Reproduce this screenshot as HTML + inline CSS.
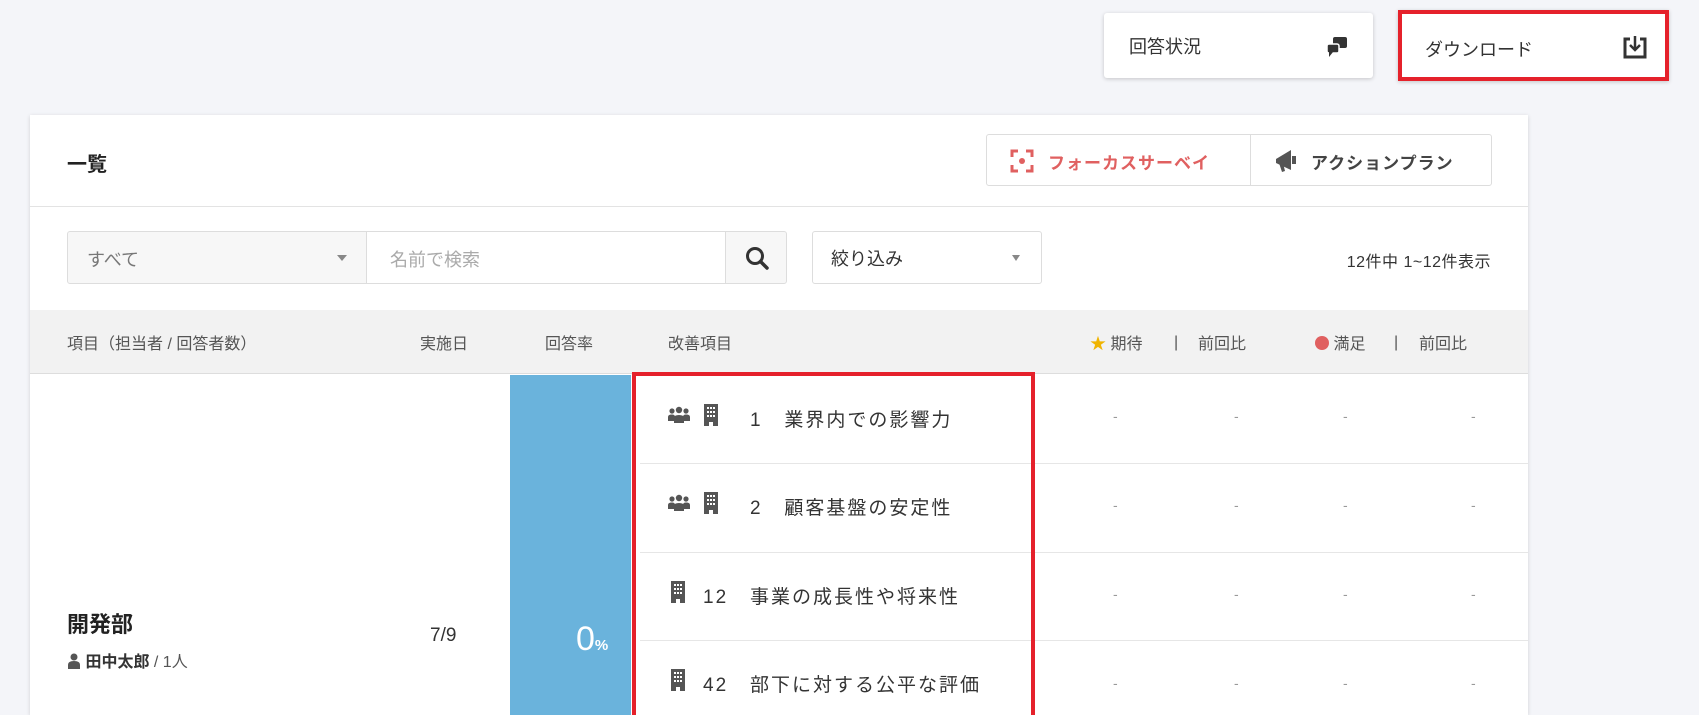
<!DOCTYPE html><html style="width:1699px;height:715px;overflow:hidden"><head><meta charset="utf-8"><style>
*{box-sizing:border-box;margin:0;padding:0}
body{width:1699px;height:715px;overflow:hidden;background:#f4f5f9;font-family:"Liberation Sans","Noto Sans CJK JP",sans-serif;color:#333;position:relative}
.a{position:absolute}
.btn{background:#fff;border-radius:3px;box-shadow:0 1px 4px rgba(0,0,0,.2);font-size:18px;color:#333}
.card{left:30px;top:115px;width:1498px;height:600px;background:#fff;box-shadow:0 1px 4px rgba(0,0,0,.15)}
.t{white-space:nowrap}
.hd{font-size:16px;color:#555;top:330px}
.dash{color:#999;font-size:14px}
.rowline{left:640px;width:888px;height:1px;background:#e6e6e6}
.it{font-size:19px;color:#333;letter-spacing:2px}
</style></head><body>
<div class="a btn" style="left:1104px;top:13px;width:269px;height:65px"><span class="a t" style="left:25px;top:20px">回答状況</span>
<svg class="a" style="left:220px;top:22px" width="28" height="24" viewBox="0 0 28 24"><rect x="9" y="2" width="14" height="11" rx="2" fill="#333"/><rect x="3" y="9" width="12" height="9" rx="2" fill="#333" stroke="#fff" stroke-width="1.5"/><path d="M5 17 L5 22 L9 17Z" fill="#333"/></svg></div>
<div class="a btn" style="left:1398px;top:10px;width:271px;height:71px;border:4px solid #e5212b;border-radius:0"><span class="a t" style="left:23px;top:22px">ダウンロード</span>
<svg class="a" style="left:220px;top:20px" width="26" height="26" viewBox="0 0 26 26"><path d="M8 5H3V23H23V5H18" fill="none" stroke="#333" stroke-width="3"/><path d="M13 2V15M8 11L13 16L18 11" fill="none" stroke="#333" stroke-width="2.5"/></svg></div>
<div class="a card"></div>
<div class="a t" style="left:67px;top:148px;font-size:20px;font-weight:bold;color:#222">一覧</div>
<div class="a" style="left:30px;top:206px;width:1498px;height:1px;background:#e3e3e3"></div>
<div class="a" style="left:986px;top:134px;width:506px;height:52px;border:1px solid #ddd;border-radius:3px"></div>
<div class="a" style="left:1250px;top:134px;width:1px;height:52px;background:#ddd"></div>
<svg class="a" style="left:1010px;top:149px" width="24" height="24" viewBox="0 0 24 24"><path d="M2 8V2H8M16 2H22V8M22 16V22H16M8 22H2V16" fill="none" stroke="#e06060" stroke-width="3"/><circle cx="12" cy="12" r="3" fill="#e06060"/></svg>
<span class="a t" style="left:1048px;top:149px;font-size:17px;font-weight:bold;color:#e06060;letter-spacing:1px">フォーカスサーベイ</span>
<svg class="a" style="left:1273px;top:147px" width="26" height="28" viewBox="0 0 26 28"><path d="M3 12L18 3V23L3 16Z" fill="#555"/><rect x="19" y="9" width="4" height="8" fill="#555"/><path d="M6 16L9 25L12 24L10 16Z" fill="#555"/></svg>
<span class="a t" style="left:1311px;top:149px;font-size:17px;font-weight:bold;color:#444;letter-spacing:1px">アクションプラン</span>
<div class="a" style="left:67px;top:231px;width:720px;height:53px;border:1px solid #ddd;border-radius:3px;background:#f7f7f7"></div>
<div class="a" style="left:366px;top:232px;width:360px;height:51px;background:#fff;border-left:1px solid #ddd;border-right:1px solid #ddd"></div>
<span class="a t" style="left:87px;top:246px;font-size:18px;color:#777">すべて</span>
<span class="a" style="left:337px;top:255px;border:5px solid transparent;border-top:6px solid #888"></span>
<span class="a t" style="left:390px;top:246px;font-size:18px;color:#aaa">名前で検索</span>
<svg class="a" style="left:744px;top:245px" width="26" height="26" viewBox="0 0 26 26"><circle cx="11" cy="11" r="7.5" fill="none" stroke="#333" stroke-width="3"/><path d="M16.5 16.5L23 23" stroke="#333" stroke-width="3.5" stroke-linecap="round"/></svg>
<div class="a" style="left:812px;top:231px;width:230px;height:53px;border:1px solid #ddd;border-radius:3px;background:#fff"></div>
<span class="a t" style="left:831px;top:245px;font-size:18px;color:#333">絞り込み</span>
<span class="a" style="left:1012px;top:255px;border:4.5px solid transparent;border-top:6px solid #888"></span>
<span class="a t" style="left:1318px;top:248px;font-size:16px;color:#333;width:173px;text-align:right;letter-spacing:.5px">12件中 1~12件表示</span>
<div class="a" style="left:30px;top:310px;width:1498px;height:64px;background:#f2f2f2;border-bottom:1px solid #ddd"></div>
<span class="a t hd" style="left:67px">項目（担当者 / 回答者数）</span>
<span class="a t hd" style="left:420px">実施日</span>
<span class="a t hd" style="left:545px">回答率</span>
<span class="a t hd" style="left:668px">改善項目</span>
<span class="a t hd" style="left:1090px"><span style="color:#f0b400">★</span> 期待</span>
<span class="a t hd" style="left:1174px;top:334px">|</span>
<span class="a t hd" style="left:1198px">前回比</span>
<span class="a t hd" style="left:1315px"><span style="display:inline-block;width:14px;height:14px;border-radius:50%;background:#e06060;vertical-align:-1px"></span> 満足</span>
<span class="a t hd" style="left:1394px;top:334px">|</span>
<span class="a t hd" style="left:1419px">前回比</span>
<div class="a" style="left:510px;top:375px;width:121px;height:340px;background:#6ab3dc"></div>
<span class="a t" style="left:576px;top:620px;font-size:34px;color:#fff">0<span style="font-size:15px;font-weight:bold">%</span></span>
<span class="a t" style="left:67px;top:607px;font-size:22px;font-weight:bold;color:#222">開発部</span>
<span class="a t" style="left:67px;top:648px;font-size:16px;color:#555"><svg width="14" height="16" viewBox="0 0 14 16" style="vertical-align:-2px"><circle cx="7" cy="4" r="3.5" fill="#555"/><path d="M1 16V12Q1 8 7 8Q13 8 13 12V16Z" fill="#555"/></svg> <b style="color:#333">田中太郎</b> / 1人</span>
<span class="a t" style="left:430px;top:625px;font-size:19px;color:#333">7/9</span>
<div class="a rowline" style="top:463px"></div><div class="a rowline" style="top:552px"></div><div class="a rowline" style="top:640px"></div>
<div class="a" style="left:632px;top:372px;width:403px;height:343px;border:4px solid #e5212b;border-bottom:none"></div>
<svg width="0" height="0" style="position:absolute"><defs>
<symbol id="g" viewBox="0 0 24 18"><circle cx="5" cy="5" r="2.6" fill="#555"/><circle cx="19" cy="5" r="2.6" fill="#555"/><circle cx="12" cy="4" r="3.2" fill="#555"/><path d="M1 15V11Q1 8.5 5 8.5Q8 8.5 8 11V15ZM16 15V11Q16 8.5 19 8.5Q23 8.5 23 11V15ZM7 17V12Q7 9 12 9Q17 9 17 12V17Z" fill="#555"/></symbol>
<symbol id="b" viewBox="0 0 16 22"><path d="M1 0H15V22H10V18H6V22H1Z" fill="#555"/><g fill="#fff"><rect x="4" y="3" width="2" height="2"/><rect x="7" y="3" width="2" height="2"/><rect x="10" y="3" width="2" height="2"/><rect x="4" y="7" width="2" height="2"/><rect x="7" y="7" width="2" height="2"/><rect x="10" y="7" width="2" height="2"/><rect x="4" y="11" width="2" height="2"/><rect x="7" y="11" width="2" height="2"/><rect x="10" y="11" width="2" height="2"/></g></symbol></defs></svg>
<svg class="a" style="left:667px;top:406px" width="24" height="18"><use href="#g"/></svg><svg class="a" style="left:703px;top:404px" width="16" height="22"><use href="#b"/></svg>
<span class="a t it" style="left:750px;top:405px">1 &nbsp; 業界内での影響力</span>
<svg class="a" style="left:667px;top:494px" width="24" height="18"><use href="#g"/></svg><svg class="a" style="left:703px;top:492px" width="16" height="22"><use href="#b"/></svg>
<span class="a t it" style="left:750px;top:493px">2 &nbsp; 顧客基盤の安定性</span>
<svg class="a" style="left:670px;top:581px" width="16" height="22"><use href="#b"/></svg>
<span class="a t it" style="left:703px;top:582px">12 &nbsp; 事業の成長性や将来性</span>
<svg class="a" style="left:670px;top:669px" width="16" height="22"><use href="#b"/></svg>
<span class="a t it" style="left:703px;top:670px">42 &nbsp; 部下に対する公平な評価</span>
<div class="a dash" style="left:1113px;top:408px">-</div><div class="a dash" style="left:1234px;top:408px">-</div><div class="a dash" style="left:1343px;top:408px">-</div><div class="a dash" style="left:1471px;top:408px">-</div>
<div class="a dash" style="left:1113px;top:497px">-</div><div class="a dash" style="left:1234px;top:497px">-</div><div class="a dash" style="left:1343px;top:497px">-</div><div class="a dash" style="left:1471px;top:497px">-</div>
<div class="a dash" style="left:1113px;top:586px">-</div><div class="a dash" style="left:1234px;top:586px">-</div><div class="a dash" style="left:1343px;top:586px">-</div><div class="a dash" style="left:1471px;top:586px">-</div>
<div class="a dash" style="left:1113px;top:675px">-</div><div class="a dash" style="left:1234px;top:675px">-</div><div class="a dash" style="left:1343px;top:675px">-</div><div class="a dash" style="left:1471px;top:675px">-</div>
</body></html>
